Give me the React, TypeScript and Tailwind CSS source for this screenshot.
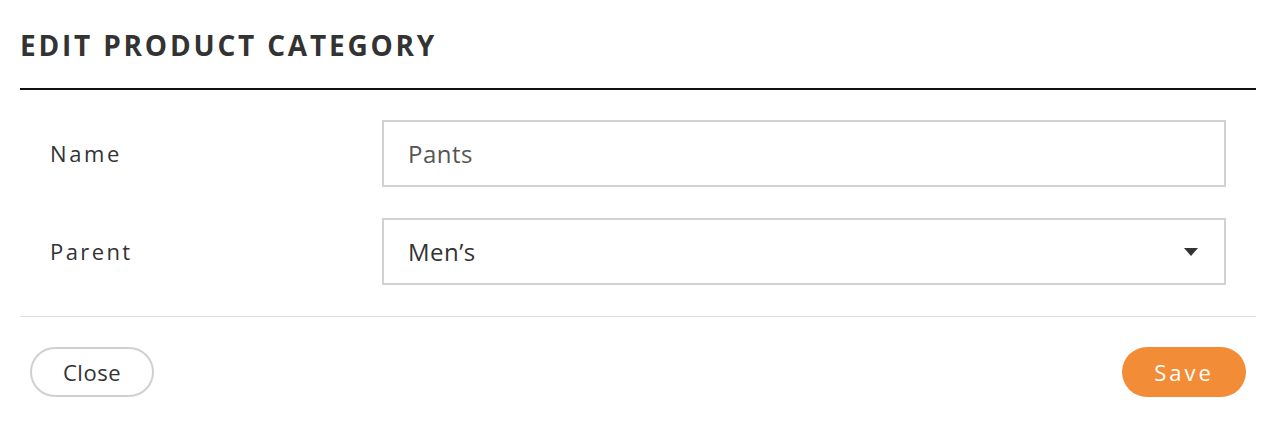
import React from 'react';

export default function App() {
  return (
    <div className="w-[1268px] h-[430px] bg-white text-[#333] pl-5 pr-3" style={{ fontFamily: '"Open Sans", Lato, sans-serif' }}>
      <div className="h-[90px] border-b-2 border-[#111] flex items-start pt-[27px]">
        <h1 className="text-[28px] leading-[36px] font-bold tracking-[2.8px] text-[#333]">EDIT PRODUCT CATEGORY</h1>
      </div>

      <div className="border-b border-[#e2e2e2] pt-[30px] pb-[31px] px-[30px] flex flex-col gap-[31px]">
        <div className="flex items-center">
          <label className="w-[332px] text-[22px] tracking-[2.6px] text-[#333]">Name</label>
          <div className="flex-1 h-[67px] border-2 border-[#d2d2d2] flex items-center px-[24px] text-[24px] tracking-[0.5px] text-[#555]">
            Pants
          </div>
        </div>
        <div className="flex items-center">
          <label className="w-[332px] text-[22px] tracking-[2.4px] text-[#333]">Parent</label>
          <div className="flex-1 h-[67px] border-2 border-[#d2d2d2] flex items-center justify-between pl-[24px] pr-[26px] text-[24px] tracking-[0.5px] text-[#333]">
            <span>Men’s</span>
            <svg width="14" height="8" viewBox="0 0 14 8" className="mt-[1px]">
              <path d="M0 0h14L7 8z" fill="#333" />
            </svg>
          </div>
        </div>
      </div>

      <div className="flex items-center justify-between pt-[30px] px-[10px]">
        <button className="h-[50px] w-[124px] rounded-full border-2 border-[#d0d0d0] text-[22px] tracking-[0.5px] text-[#333] bg-white">
          Close
        </button>
        <button className="h-[50px] w-[124px] rounded-full bg-[#f28c37] text-[22px] tracking-[3px] text-white">
          Save
        </button>
      </div>
    </div>
  );
}
